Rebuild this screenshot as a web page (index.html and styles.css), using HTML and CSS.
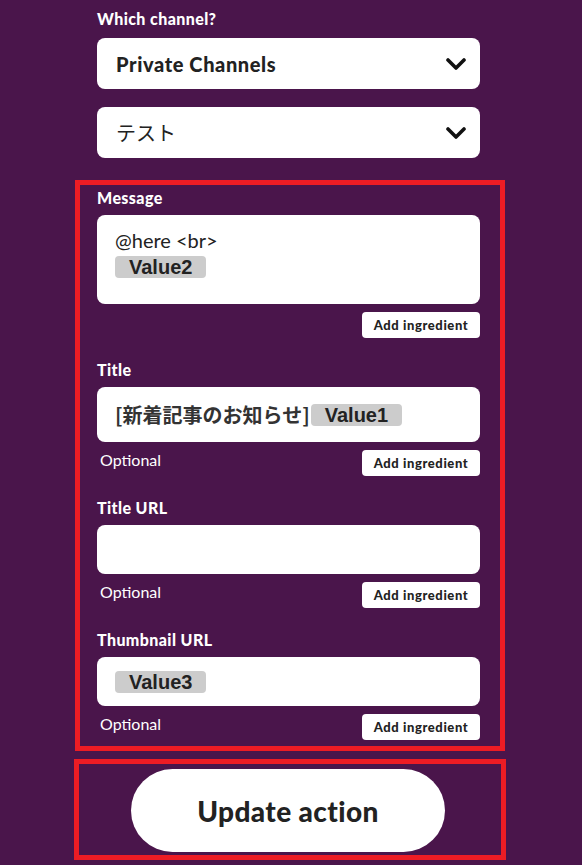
FILE: index.html
```html
<!DOCTYPE html>
<html lang="ja">
<head>
    <meta charset="UTF-8">
    <meta name="viewport" content="width=device-width, initial-scale=1.0">
    <title>Update action</title>
    <link rel="stylesheet" href="styles.css">
</head>
<body>
    <main class="page">
        <section class="channel">
            <label class="field-label">Which channel?</label>
            <div class="select">
                <span class="select-text bold">Private Channels</span>
                <svg class="chevron" width="20" height="12" viewBox="0 0 20 12"><path d="M2 2 L10 10 L18 2" fill="none" stroke="#111" stroke-width="3.6" stroke-linecap="round" stroke-linejoin="round"/></svg>
            </div>
            <div class="select">
                <span class="select-text jp">テスト</span>
                <svg class="chevron" width="20" height="12" viewBox="0 0 20 12"><path d="M2 2 L10 10 L18 2" fill="none" stroke="#111" stroke-width="3.6" stroke-linecap="round" stroke-linejoin="round"/></svg>
            </div>
        </section>

        <section class="fields">
            <div class="field">
                <label class="field-label">Message</label>
                <div class="input input-tall">
                    <div>@here &lt;br&gt;</div>
                    <div><span class="chip">Value2</span></div>
                </div>
                <div class="field-foot">
                    <span></span>
                    <button class="add-btn">Add ingredient</button>
                </div>
            </div>

            <div class="field">
                <label class="field-label">Title</label>
                <div class="input input-title">
                    <span class="jp-title">[新着記事のお知らせ]</span><span class="chip">Value1</span>
                </div>
                <div class="field-foot">
                    <span class="optional">Optional</span>
                    <button class="add-btn">Add ingredient</button>
                </div>
            </div>

            <div class="field">
                <label class="field-label">Title URL</label>
                <div class="input"></div>
                <div class="field-foot">
                    <span class="optional">Optional</span>
                    <button class="add-btn">Add ingredient</button>
                </div>
            </div>

            <div class="field">
                <label class="field-label">Thumbnail URL</label>
                <div class="input">
                    <span class="chip">Value3</span>
                </div>
                <div class="field-foot">
                    <span class="optional">Optional</span>
                    <button class="add-btn">Add ingredient</button>
                </div>
            </div>
        </section>

        <section class="submit">
            <button class="update-btn">Update action</button>
        </section>
    </main>
</body>
</html>
```

FILE: styles.css
```css
body {
    margin: 0;
    background-color: #4a154b;
    font-family: Lato, "Noto Sans CJK JP", sans-serif;
    color: #222;
}

.page {
    width: 430px;
    margin-left: 75px;
}

.channel {
    padding: 9px 25px 0 22px;
}

.field-label {
    display: block;
    color: #fff;
    font-weight: 900;
    font-size: 16px;
    letter-spacing: 0.4px;
    line-height: 20px;
    margin-bottom: 7px;
}

.channel .field-label {
    margin-bottom: 9px;
}

.select {
    display: flex;
    align-items: center;
    justify-content: space-between;
    height: 51px;
    background-color: #fff;
    border-radius: 8px;
    padding: 0 14px 0 19px;
    margin-bottom: 18px;
    box-sizing: border-box;
}

.select-text {
    font-size: 20px;
}

.bold {
    font-weight: 900;
    letter-spacing: 0.6px;
}

.jp {
    font-family: "Noto Sans CJK JP", sans-serif;
    font-size: 20px;
}

.fields {
    border: 5px solid #ed1c24;
    padding: 3px 20px 0 17px;
    margin-top: 22px;
}

.field {
    margin-bottom: 22px;
}

.field:last-child {
    margin-bottom: 6px;
}

.input {
    background-color: #fff;
    border-radius: 8px;
    height: 49px;
    box-sizing: border-box;
    padding: 0 18px;
    display: flex;
    align-items: center;
    font-size: 20px;
}

.input-tall {
    height: 89px;
    display: block;
    padding-top: 13px;
    line-height: 24px;
}

.input-title {
    height: 55px;
}

.jp-title {
    font-family: "Noto Sans CJK JP", sans-serif;
    font-weight: bold;
    font-size: 20px;
    color: #333;
    margin-right: 1px;
}

.chip {
    display: inline-block;
    vertical-align: middle;
    background-color: #ccc;
    border-radius: 4px;
    font-family: "Liberation Sans", Arial, sans-serif;
    font-weight: bold;
    font-size: 20px;
    line-height: 22px;
    padding: 0 14px;
    color: #222;
}

.field-foot {
    display: flex;
    justify-content: space-between;
    align-items: flex-start;
    margin-top: 8px;
}

.optional {
    color: #fff;
    font-size: 16px;
    margin-left: 3px;
    line-height: 20px;
}

.add-btn {
    background-color: #fff;
    border: none;
    border-radius: 4px;
    width: 118px;
    height: 26px;
    padding: 0;
    font-family: Lato, sans-serif;
    font-weight: 900;
    font-size: 13px;
    letter-spacing: 0.6px;
    color: #222;
}

.submit {
    border: 5px solid #ed1c24;
    margin: 8px -1px 0 -1px;
    padding: 5px 0 3px 52px;
}

.update-btn {
    width: 314px;
    height: 83px;
    border: none;
    border-radius: 42px;
    background-color: #fff;
    font-family: Lato, sans-serif;
    font-weight: 900;
    font-size: 28px;
    letter-spacing: 0.4px;
    color: #222;
    padding: 0;
}
```
